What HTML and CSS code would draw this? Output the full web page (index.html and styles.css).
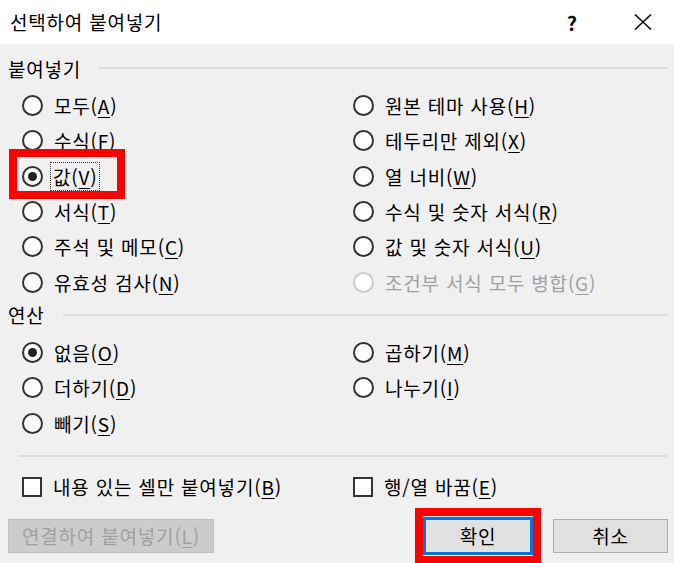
FILE: index.html
```html
<!DOCTYPE html>
<html lang="ko">
<head>
    <meta charset="UTF-8">
    <meta name="viewport" content="width=device-width, initial-scale=1.0">
    <title>선택하여 붙여넣기</title>
    <link rel="stylesheet" href="styles.css">
</head>
<body>

    <div class="titlebar">
        <span class="title">선택하여 붙여넣기</span>
        <span class="help">?</span>
        <span class="close">
            <svg width="18" height="16" viewBox="0 0 18 16"><path d="M1 0.5L17 15.5M17 0.5L1 15.5" stroke="#111" stroke-width="1.6" fill="none"/></svg>
        </span>
    </div>

    <div class="group-label"><span>붙여넣기</span><i class="rule"></i></div>
    <div class="options paste">
        <label class="option"><span class="radio"></span><span>모두(<u>A</u>)</span></label>
        <label class="option"><span class="radio"></span><span>원본 테마 사용(<u>H</u>)</span></label>
        <label class="option"><span class="radio"></span><span>수식(<u>F</u>)</span></label>
        <label class="option"><span class="radio"></span><span>테두리만 제외(<u>X</u>)</span></label>
        <label class="option marked"><span class="radio checked"></span><span class="focus">값(<u>V</u>)</span></label>
        <label class="option"><span class="radio"></span><span>열 너비(<u>W</u>)</span></label>
        <label class="option"><span class="radio"></span><span>서식(<u>T</u>)</span></label>
        <label class="option"><span class="radio"></span><span>수식 및 숫자 서식(<u>R</u>)</span></label>
        <label class="option"><span class="radio"></span><span>주석 및 메모(<u>C</u>)</span></label>
        <label class="option"><span class="radio"></span><span>값 및 숫자 서식(<u>U</u>)</span></label>
        <label class="option"><span class="radio"></span><span>유효성 검사(<u>N</u>)</span></label>
        <label class="option disabled"><span class="radio"></span><span>조건부 서식 모두 병합(<u>G</u>)</span></label>
    </div>

    <div class="group-label second"><span>연산</span><i class="rule"></i></div>
    <div class="options ops">
        <label class="option"><span class="radio checked"></span><span>없음(<u>O</u>)</span></label>
        <label class="option"><span class="radio"></span><span>곱하기(<u>M</u>)</span></label>
        <label class="option"><span class="radio"></span><span>더하기(<u>D</u>)</span></label>
        <label class="option"><span class="radio"></span><span>나누기(<u>I</u>)</span></label>
        <label class="option"><span class="radio"></span><span>빼기(<u>S</u>)</span></label>
    </div>

    <div class="separator"></div>

    <div class="options checks">
        <label class="option"><span class="checkbox"></span><span>내용 있는 셀만 붙여넣기(<u>B</u>)</span></label>
        <label class="option"><span class="checkbox"></span><span>행/열 바꿈(<u>E</u>)</span></label>
    </div>

    <div class="buttons">
        <button type="button" class="btn link" disabled>연결하여 붙여넣기(<u>L</u>)</button>
        <span class="spacer"></span>
        <button type="button" class="btn default">확인</button>
        <button type="button" class="btn">취소</button>
    </div>

</body>
</html>
```

FILE: styles.css
```css
body {
    font-family: "Noto Sans CJK KR", "Noto Sans", sans-serif;
    font-size: 19px;
    letter-spacing: 0.8px;
    background-color: #f0f0f0;
    color: #000;
    margin: 0;
    width: 674px;
    height: 563px;
    overflow: hidden;
}
u {
    text-decoration-thickness: 1px;
    text-underline-offset: 3px;
}
.titlebar {
    height: 44px;
    background-color: #fff;
    display: flex;
    align-items: center;
    padding-left: 10px;
}
.title {
    flex: 1;
    line-height: 44px;
}
.help {
    width: 20px;
    text-align: center;
    margin-right: 52px;
    font-size: 20px;
    font-weight: 600;
    letter-spacing: 0;
}
.close {
    width: 18px;
    height: 16px;
    margin-right: 22px;
    display: flex;
}
.group-label {
    display: flex;
    align-items: center;
    height: 24px;
    margin-top: 12px;
    padding: 0 6px 0 8px;
    gap: 18px;
}
.group-label.second {
    margin-top: 3px;
}
.rule {
    flex: 1;
    height: 2px;
    background-color: #dcdcdc;
}
.options {
    display: grid;
    grid-template-columns: 331px 1fr;
    padding-left: 22px;
    margin-top: 8px;
}
.option {
    display: flex;
    align-items: center;
    gap: 11px;
    height: 35.3px;
    position: relative;
}
.radio {
    width: 17px;
    height: 17px;
    border: 2px solid #333;
    border-radius: 50%;
    background-color: #fff;
    display: flex;
    align-items: center;
    justify-content: center;
    flex-shrink: 0;
}
.radio.checked::after {
    content: "";
    width: 9px;
    height: 9px;
    border-radius: 50%;
    background-color: #222;
}
.option.disabled {
    color: #a0a0a0;
}
.option.disabled .radio {
    border-color: #cccccc;
}
.focus {
    outline: 1px dotted #333;
    outline-offset: 0;
    padding: 0 2px;
    margin-left: -3px;
    line-height: 27px;
}
.option.marked::after {
    content: "";
    position: absolute;
    left: -13px;
    top: -10px;
    width: 100px;
    height: 34px;
    border: 8px solid #f00;
}
.separator {
    height: 2px;
    background-color: #dcdcdc;
    margin: 14px 7px 0 18px;
}
.checks {
    margin-top: 18px;
}
.checks .option {
    height: 24px;
}
.checkbox {
    width: 16px;
    height: 16px;
    border: 2px solid #333;
    background-color: #fff;
    flex-shrink: 0;
}
.buttons {
    display: flex;
    align-items: center;
    margin-top: 18px;
    padding: 0 6px 0 8px;
    gap: 20px;
}
.spacer {
    flex: 1;
}
.btn {
    font-family: inherit;
    font-size: 19px;
    letter-spacing: 0.8px;
    color: #000;
    height: 34px;
    width: 115px;
    padding: 0;
    border: 1px solid #adadad;
    background-color: #e1e1e1;
}
.btn.link {
    width: 206px;
    color: #a0a0a0;
    background-color: #cccccc;
    border-color: #bfbfbf;
}
.btn.default {
    width: 110px;
    height: 38px;
    border: 3px solid #0078d7;
    position: relative;
}
.btn.default::after {
    content: "";
    position: absolute;
    left: -11px;
    top: -12px;
    width: 110px;
    height: 40px;
    border: 8px solid #f00;
}
```
